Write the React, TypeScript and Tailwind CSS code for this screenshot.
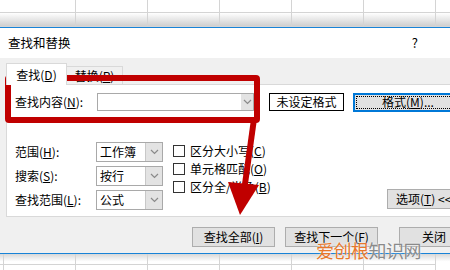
import React from 'react';

const cols = [76, 72, 72, 72, 72, 72, 72];

function GridRow({ h, shade, first = 76 }: { h: number; shade?: boolean; first?: number }) {
  const widths = [first, ...cols.slice(1)];
  return (
    <div className="flex" style={{ height: h }}>
      {widths.map((w, i) => (
        <div
          key={i}
          className={`shrink-0 border-r border-b border-[#d4d4d4] ${shade ? 'bg-gradient-to-b from-white to-[#cfcfcf]' : ''}`}
          style={{ width: w }}
        />
      ))}
    </div>
  );
}

function Chevron() {
  return (
    <svg width="9" height="6" viewBox="0 0 9 6">
      <path d="M1 1 L4.5 4.5 L8 1" fill="none" stroke="#8a8a8a" strokeWidth="1.2" />
    </svg>
  );
}

function Select({ value }: { value: string }) {
  return (
    <div className="flex h-[20px] w-[67px] border border-[#a9a9a9] bg-white">
      <div className="flex-1 pl-[3px] leading-[18px]">{value}</div>
      <div className="flex w-[17px] items-center justify-center border-l border-[#c8c8c8] bg-[#e3e3e3]">
        <Chevron />
      </div>
    </div>
  );
}

function Check({ children }: { children: React.ReactNode }) {
  return (
    <div className="flex h-[18px] items-center gap-[5px]">
      <div className="h-[12px] w-[12px] border border-[#333] bg-white" />
      <span>{children}</span>
    </div>
  );
}

function Btn({ w, children }: { w: number; children: React.ReactNode }) {
  return (
    <div
      className="flex h-[20px] shrink-0 items-center justify-center border border-[#adadad] bg-[#e1e1e1]"
      style={{ width: w }}
    >
      {children}
    </div>
  );
}

export default function App() {
  return (
    <div className="relative flex h-[270px] w-[450px] flex-col overflow-hidden bg-white text-[12px] text-black font-['Noto_Sans_CJK_SC',sans-serif]">
      {/* sheet behind */}
      <div className="h-[27px] shrink-0">
        <GridRow h={13} />
        <GridRow h={14} shade />
      </div>

      {/* dialog */}
      <div className="flex h-[227px] shrink-0 flex-col border-y border-[#1883d7]">
        <div className="flex h-[30px] items-center justify-between bg-white pl-[8px] pr-[32px]">
          <span className="text-[12.5px]">查找和替换</span>
          <span className="text-[13px]">?</span>
        </div>

        <div className="flex flex-1 flex-col bg-[#f0f0f0] pt-[5px]">
          {/* tabs */}
          <div className="flex h-[21px] items-end pl-[6px]">
            <div className="relative z-10 -mb-px flex h-[22px] w-[61px] items-center justify-center border border-b-0 border-[#d9d9d9] bg-white">
              查找(<u>D</u>)
            </div>
            <div className="flex h-[18px] w-[56px] items-center justify-center border border-l-0 border-b-0 border-[#d9d9d9] bg-[#f0f0f0]">
              替换(<u>P</u>)
            </div>
          </div>

          {/* panel */}
          <div className="ml-[6px] flex h-[133px] w-[460px] flex-col border border-[#d9d9d9] bg-white pl-[8px] pt-[8px]">
            <div className="flex h-[18px] items-center">
              <span className="w-[82px]">查找内容(<u>N</u>):</span>
              <div className="flex h-[18px] w-[157px] border border-[#a9a9a9] bg-white">
                <div className="flex-1" />
                <div className="flex w-[12px] items-center justify-center bg-[#e3e3e3]">
                  <Chevron />
                </div>
              </div>
              <div className="ml-[15px] flex h-[18px] w-[75px] items-center justify-center border border-black bg-white">
                未设定格式
              </div>
              <div className="ml-[9px] flex h-[19px] w-[110px] items-center border-2 border-[#0078d7] bg-[#e1e1e1] p-px">
                <div className="flex h-full w-full items-center justify-center border border-dotted border-black">
                  格式(<u>M</u>)...
                </div>
              </div>
            </div>

            <div className="mt-[31px] flex">
              <div className="flex flex-col gap-[4px]">
                {[
                  ['范围', 'H', '工作簿'],
                  ['搜索', 'S', '按行'],
                  ['查找范围', 'L', '公式'],
                ].map(([l, k, v]) => (
                  <div key={l} className="flex items-center">
                    <span className="w-[81px]">
                      {l}(<u>{k}</u>):
                    </span>
                    <Select value={v} />
                  </div>
                ))}
              </div>
              <div className="ml-[10px] flex flex-col">
                <Check>
                  区分大小写(<u>C</u>)
                </Check>
                <Check>
                  单元格匹配(<u>O</u>)
                </Check>
                <Check>
                  区分全/半角(<u>B</u>)
                </Check>
              </div>
              <div className="ml-auto flex items-end pb-[1px]">
                <div className="mr-[3px] flex h-[20px] w-[75px] items-center border border-[#adadad] bg-[#e1e1e1] pl-[8px]">
                  选项(<u>T</u>) &lt;&lt;
                </div>
              </div>
            </div>
          </div>

          {/* buttons */}
          <div className="mt-[10px] flex pl-[192px]">
            <Btn w={83}>
              查找全部(<u>I</u>)
            </Btn>
            <div className="ml-[10px]">
              <Btn w={93}>
                查找下一个(<u>F</u>)
              </Btn>
            </div>
            <div className="ml-[21px]">
              <Btn w={70}>关闭</Btn>
            </div>
          </div>
        </div>
      </div>

      {/* sheet below */}
      <div className="flex-1 bg-gradient-to-b from-[#d8d8d8] to-white to-40%">
        <GridRow h={11} first={4} />
        <GridRow h={8} first={4} />
      </div>

      {/* annotation */}
      <div className="absolute left-[5px] top-[75px] h-[48px] w-[255px] rounded-[4px] border-[6px] border-[#c00000]" />
      <svg className="absolute left-0 top-0" width="450" height="270" viewBox="0 0 450 270">
        <polygon points="251,119 257,119 248,184 242,184" fill="#c00000" />
        <polygon points="228,182 259,185 240,215" fill="#c00000" />
      </svg>

      {/* watermark */}
      <div className="absolute left-[316px] top-[239px] text-[18px] leading-[22px] tracking-[-0.5px] [text-shadow:0_0_2px_white]">
        <span className="text-[#e8772a]">爱创根</span>
        <span className="text-[#8a8a8a]">知识网</span>
      </div>
    </div>
  );
}
